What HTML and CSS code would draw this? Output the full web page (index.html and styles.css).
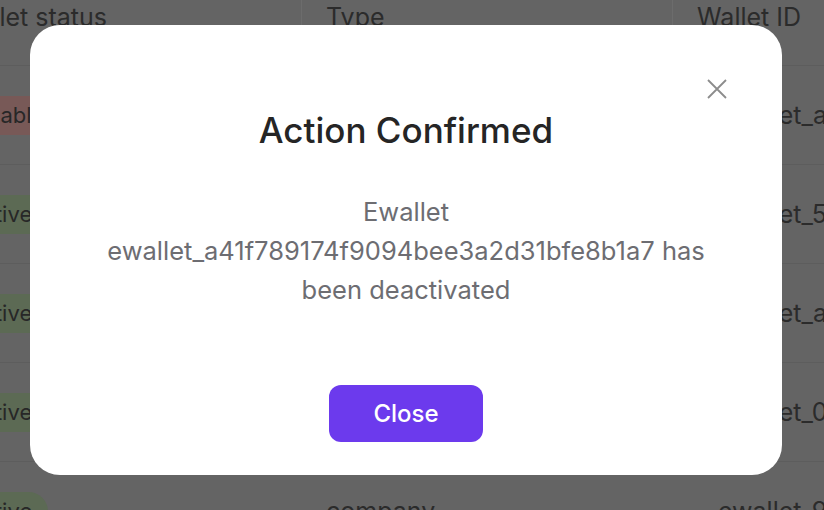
FILE: index.html
```html
<!DOCTYPE html>
<html lang="en">
<head>
<meta charset="utf-8">
<title>Action Confirmed</title>
<link rel="stylesheet" href="styles.css">
</head>
<body>
<div class="table">
  <div class="row head">
    <div class="cell hcell">Wallet status</div>
    <div class="cell hcell">Type</div>
    <div class="cell hcell last">Wallet ID</div>
  </div>
  <div class="row">
    <div class="cell badge-cell"><span class="badge red">disabled</span></div>
    <div class="cell">company</div>
    <div class="cell id">ewallet_a41f789174f9094bee3a2d31bfe8b1a7</div>
  </div>
  <div class="row">
    <div class="cell badge-cell"><span class="badge green">active</span></div>
    <div class="cell">company</div>
    <div class="cell id">ewallet_5c0e2a7b91d34f6a8e1b2c3d4e5f6a7b</div>
  </div>
  <div class="row">
    <div class="cell badge-cell"><span class="badge green">active</span></div>
    <div class="cell">company</div>
    <div class="cell id">ewallet_a7d9e1c3b5f7092a4c6e8b0d2f4a6c8e</div>
  </div>
  <div class="row">
    <div class="cell badge-cell"><span class="badge green">active</span></div>
    <div class="cell">company</div>
    <div class="cell id">ewallet_0b2d4f6a8c0e2a4c6e8a0b2d4f6a8c0e</div>
  </div>
  <div class="row">
    <div class="cell badge-cell"><span class="badge green">active</span></div>
    <div class="cell">company</div>
    <div class="cell id">ewallet_9e8d7c6b5a4f3e2d1c0b9a8f7e6d5c4b</div>
  </div>
</div>

<div class="backdrop">
  <div class="modal" role="dialog" aria-labelledby="modal-title">
    <div class="modal-top">
      <button class="icon-btn" aria-label="Close">
        <svg width="20" height="20" viewBox="0 0 20 20" fill="none" stroke="currentColor" stroke-width="1.8" stroke-linecap="butt">
          <path d="M1 1L19 19M19 1L1 19"/>
        </svg>
      </button>
    </div>
    <h2 class="title" id="modal-title">Action Confirmed</h2>
    <p class="message">Ewallet ewallet_a41f789174f9094bee3a2d31bfe8b1a7 has been deactivated</p>
    <button class="primary">Close</button>
  </div>
</div>
</body>
</html>
```

FILE: styles.css
```css
* { box-sizing: border-box; }

html, body {
  margin: 0;
  padding: 0;
  width: 824px;
  height: 510px;
  overflow: hidden;
  background: #646464;
  font-family: Inter, "Noto Sans", "Liberation Sans", sans-serif;
}

.table {
  width: 1141px;
  margin-left: -68px;
  color: #2b2b2b;
  font-size: 25px;
}

.row {
  display: grid;
  grid-template-columns: 370px 371px 400px;
  height: 99px;
  border-bottom: 1px solid #5d5d5d;
  align-items: center;
}

.row.head {
  height: 66px;
  align-items: stretch;
}

.cell {
  padding-left: 24px;
  white-space: nowrap;
  overflow: hidden;
}

.hcell {
  padding-top: 2px;
  line-height: 30px;
  border-right: 1px solid #6c6c6c;
}

.hcell.last { border-right: none; }

.badge-cell { padding-left: 22px; }

.id { padding-left: 45px; }

.badge {
  display: inline-flex;
  align-items: center;
  height: 39px;
  padding: 0 16px;
  border-radius: 20px;
  font-size: 22px;
  color: #272727;
}

.badge.red { background: #785957; }
.badge.green { background: #5c6a54; }

.backdrop {
  position: fixed;
  inset: 0;
  display: flex;
  padding: 25px 42px 35px 30px;
}

.modal {
  flex: 1;
  background: #ffffff;
  border-radius: 30px;
  padding: 54px 55px 33px;
  display: flex;
  flex-direction: column;
  align-items: center;
}

.modal-top {
  align-self: stretch;
  display: flex;
  justify-content: flex-end;
  height: 20px;
}

.icon-btn {
  border: none;
  background: none;
  padding: 0;
  width: 20px;
  height: 20px;
  color: #8c8c8c;
  display: block;
  cursor: pointer;
}

.icon-btn svg { display: block; }

.title {
  margin: 10px 0 0;
  font-size: 35px;
  line-height: 42px;
  font-weight: 500;
  color: #252525;
}

.message {
  margin: 41px 0 0;
  max-width: 630px;
  text-align: center;
  font-size: 25.5px;
  line-height: 39px;
  color: #6d6d72;
}

.primary {
  margin-top: 76px;
  width: 154px;
  height: 57px;
  border: none;
  border-radius: 12px;
  background: #6c3aed;
  color: #ffffff;
  font-family: inherit;
  font-size: 24px;
  font-weight: 500;
  cursor: pointer;
}
```
